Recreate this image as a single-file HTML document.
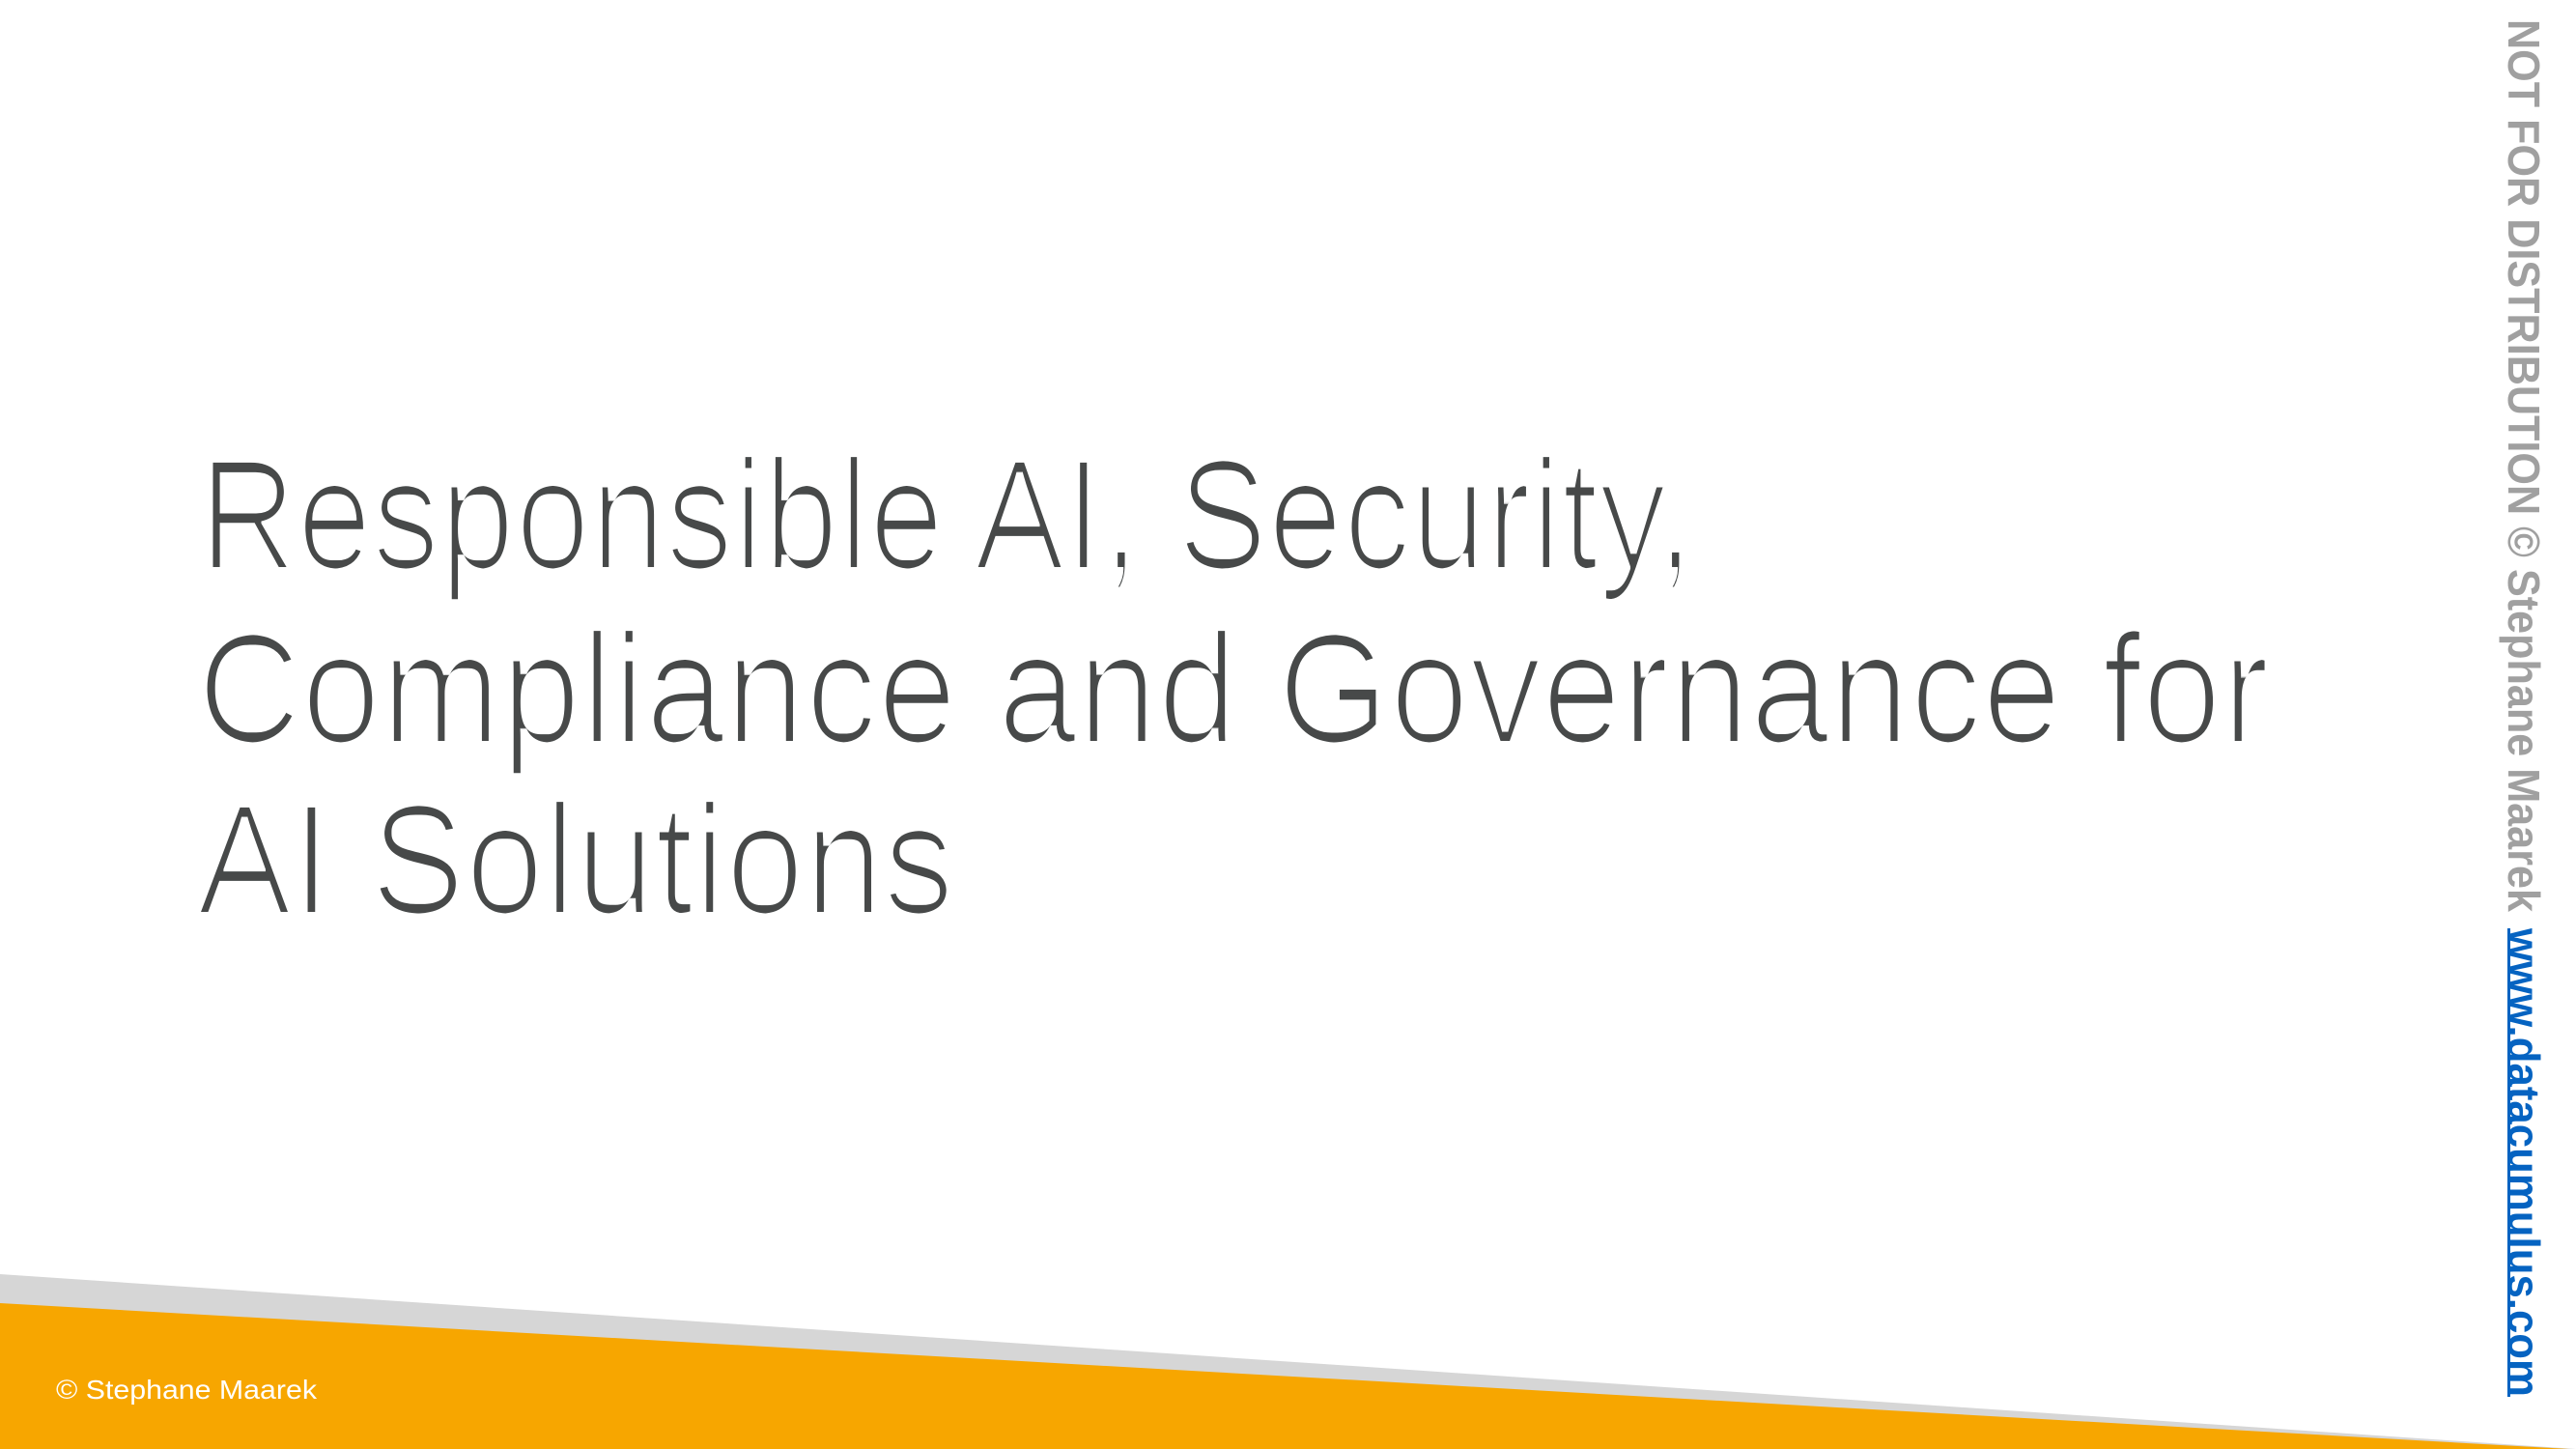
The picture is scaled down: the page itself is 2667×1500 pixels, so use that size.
<!DOCTYPE html>
<html><head><meta charset="utf-8"><style>
html,body{margin:0;padding:0;background:#fff;}
svg{display:block;}
</style></head><body>
<svg width="2667" height="1500" viewBox="0 0 2667 1500" xmlns="http://www.w3.org/2000/svg">
<defs>
<filter id="thin" x="-5%" y="-20%" width="110%" height="140%">
<feMorphology operator="erode" radius="3 1"/>
</filter>
</defs>
<rect width="2667" height="1500" fill="#fff"/>
<polygon points="0,1319 2667,1500 0,1500" fill="#d6d6d6"/>
<polygon points="0,1349 2660,1500 0,1500" fill="#f7a600"/>
<g font-family="'Liberation Sans', sans-serif" font-size="160" fill="#464a4a" filter="url(#thin)">
<text x="206" y="588" textLength="1548" lengthAdjust="spacingAndGlyphs">Responsible AI, Security,</text>
<text x="204" y="768" textLength="2146" lengthAdjust="spacingAndGlyphs">Compliance and Governance for</text>
<text x="204" y="945" textLength="784" lengthAdjust="spacingAndGlyphs">AI Solutions</text>
</g>
<text x="58" y="1448" font-family="'Liberation Sans', sans-serif" font-size="28" fill="#fff" textLength="270" lengthAdjust="spacingAndGlyphs">© Stephane Maarek</text>
<g transform="translate(2597,0) rotate(90)" font-family="'Liberation Sans', sans-serif" font-weight="bold" font-size="46">
<text x="20" y="0" fill="#a0a0a0" textLength="924" lengthAdjust="spacingAndGlyphs">NOT FOR DISTRIBUTION © Stephane Maarek</text>
<text x="961" y="0" fill="#0563c1" textLength="485" lengthAdjust="spacingAndGlyphs">www.datacumulus.com</text>
</g>
<rect x="2596" y="961" width="3" height="485" fill="#0563c1"/>
</svg>
</body></html>
